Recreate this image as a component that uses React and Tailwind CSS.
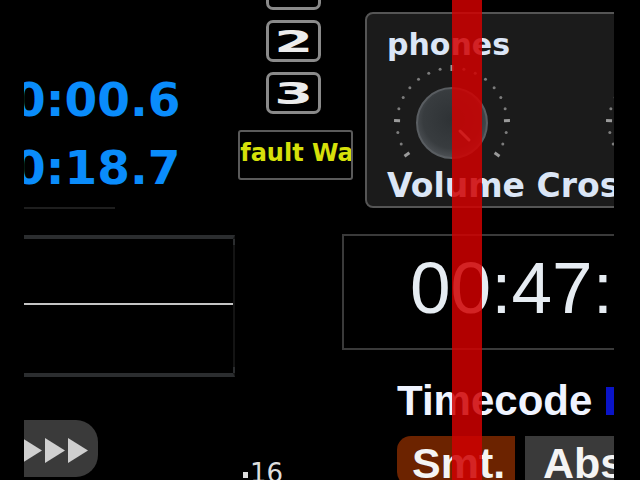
import React from "react";

function Knob({ showBody = true }) {
  const cx = 60;
  const cy = 61;
  const items = [];
  for (let i = 0; i <= 20; i++) {
    const a = (-125 + i * 12.5) * (Math.PI / 180);
    const x = cx + 55 * Math.sin(a);
    const y = cy - 55 * Math.cos(a);
    const major = i === 0 || i === 20 || i === 3 || i === 10 || i === 17;
    if (major) {
      const deg = -125 + i * 12.5;
      items.push(
        <rect
          key={i}
          x={x - 1.5}
          y={y - 3}
          width="3"
          height="6"
          fill="#9a9a9a"
          transform={`rotate(${deg} ${x} ${y})`}
        />
      );
    } else {
      items.push(<circle key={i} cx={x} cy={y} r="1.5" fill="#7c7c7c" />);
    }
  }
  return (
    <svg width="120" height="104" viewBox="0 0 120 104" className="shrink-0">
      <defs>
        <radialGradient id="kg" cx="50%" cy="45%" r="55%">
          <stop offset="0%" stopColor="#2e3235" />
          <stop offset="75%" stopColor="#383c3f" />
          <stop offset="100%" stopColor="#4d5155" />
        </radialGradient>
      </defs>
      {items}
      {showBody && (
        <>
          <circle cx={cx} cy={cy} r="35" fill="url(#kg)" stroke="#595d61" strokeWidth="2" />
          <line x1={cx + 8} y1={cy + 8} x2={cx + 17} y2={cy + 17} stroke="#c9c9c9" strokeWidth="3" strokeLinecap="round" />
        </>
      )}
    </svg>
  );
}

function NumBox({ n }) {
  return (
    <div className="ml-[31px] w-[55px] h-[42px] shrink-0 border-[3px] border-[#8a8a8a] rounded-[7px] bg-black flex items-center justify-center">
      <span className="inline-block scale-x-[1.8] text-[31px] leading-[31px] font-bold text-[#ececec] font-['DejaVu_Sans',sans-serif]">
        {n}
      </span>
    </div>
  );
}

export default function App() {
  return (
    <div className="w-[640px] h-[480px] bg-black overflow-hidden">
      <div className="ml-[24px] w-[590px] h-[480px] overflow-hidden relative flex">
        {/* Column A */}
        <div className="w-[211px] shrink-0 flex flex-col">
          <div className="mt-[77px] -ml-[11px] h-[46px] leading-[46px] text-[47px] font-bold text-[#0a8cfb] whitespace-nowrap font-['DejaVu_Sans',sans-serif]">
            0:00.6
          </div>
          <div className="mt-[22px] -ml-[11px] h-[46px] leading-[46px] text-[47px] font-bold text-[#0a8cfb] whitespace-nowrap font-['DejaVu_Sans',sans-serif]">
            0:18.7
          </div>
          <div className="mt-[16px] h-[2px] w-[91px] bg-[#1e1e1e]" />
          <div className="mt-[26px] h-[142px] border-t-4 border-b-4 border-[#2b2d2f] border-r-2 border-r-[#141414] relative">
            <div className="mt-[64px] h-[2px] bg-[#c4c4c4]" />
            <div className="absolute right-[-2px] top-0 w-[2px] h-[6px] bg-[#2b2d2f]" />
            <div className="absolute right-[-2px] bottom-0 w-[2px] h-[6px] bg-[#2b2d2f]" />
          </div>
          <div className="mt-[43px] h-[57px] w-[74px] bg-[#3a3a3a] rounded-r-[22px]">
            <svg width="74" height="57" viewBox="0 0 74 57">
              <polygon points="-2,18 18,30.5 -2,43" fill="#cfcfcf" />
              <polygon points="21,18 41,30.5 21,43" fill="#cfcfcf" />
              <polygon points="44,18 64,30.5 44,43" fill="#cfcfcf" />
            </svg>
          </div>
        </div>

        {/* Column B */}
        <div className="w-[107px] shrink-0 flex flex-col">
          <div className="-mt-[32px] flex flex-col gap-[10px]">
            <NumBox n="1" />
            <NumBox n="2" />
            <NumBox n="3" />
          </div>
          <div className="mt-[16px] ml-[3px] w-[115px] h-[50px] shrink-0 border-2 border-[#5a5a5a] rounded-[3px] overflow-hidden bg-black">
            <div className="pt-[9px] -ml-[36px] whitespace-nowrap text-[24px] leading-[24px] font-bold text-[#d6e00a] font-['DejaVu_Sans',sans-serif]">
              Default Waveform
            </div>
          </div>
          <div className="mt-[252px] ml-[22px] w-[26px] h-[4px] bg-[#c4c4c4]" />
          <div className="mt-[28px] ml-[8px] flex items-start">
            <div className="mt-[12px] w-[5px] h-[6px] bg-[#dddddd]" />
            <span className="ml-[2px] text-[26px] leading-[26px] text-[#dddddd] font-['DejaVu_Sans',sans-serif]">
              16
            </span>
          </div>
        </div>

        {/* Column C */}
        <div className="w-[272px] shrink-0 flex flex-col">
          <div className="mt-[12px] ml-[23px] w-[260px] h-[196px] shrink-0 border-2 border-[#555555] rounded-[8px] bg-[#1b1b1b] overflow-hidden flex flex-col pt-[16px] pl-[20px]">
            <div className="text-[30px] leading-[30px] font-bold text-[#dbe6f6] font-['DejaVu_Sans',sans-serif]">
              phones
            </div>
            <div className="mt-[2px] h-[104px] flex">
              <div className="ml-[5px]">
                <Knob />
              </div>
              <div className="ml-[92px]">
                <Knob />
              </div>
            </div>
            <div className="mt-[3px] whitespace-nowrap text-[33px] leading-[33px] font-bold text-[#dbe6f6] font-['DejaVu_Sans',sans-serif]">
              Volume Crossfader
            </div>
          </div>

          <div className="mt-[26px] w-[290px] h-[116px] shrink-0 border-2 border-[#3a3a3a] overflow-hidden">
            <div className="pt-[15px] pl-[66px] whitespace-nowrap text-[73px] leading-[73px] text-[#e6ecf2] font-['Liberation_Sans',sans-serif]">
              00:47:37
            </div>
          </div>

          <div className="mt-[30px] ml-[55px] flex items-center whitespace-nowrap">
            <span className="text-[42px] leading-[42px] font-bold text-[#f0f4ff] font-['Liberation_Sans',sans-serif]">
              Timecode
            </span>
            <div className="ml-[14px] w-[20px] h-[28px] bg-[#0a14c8] shrink-0" />
          </div>

          <div className="mt-[14px] ml-[55px] flex gap-[10px]">
            <div className="w-[118px] h-[50px] shrink-0 bg-[#6c2300] rounded-l-[14px] pt-[6px] pl-[15px] whitespace-nowrap text-[43px] leading-[43px] font-bold text-[#f4f4f4] font-['Liberation_Sans',sans-serif]">
              Smt.
            </div>
            <div className="w-[100px] h-[50px] shrink-0 bg-[#3a3a3a] pt-[6px] pl-[18px] whitespace-nowrap text-[43px] leading-[43px] font-bold text-[#f4f4f4] font-['Liberation_Sans',sans-serif]">
              Abs
            </div>
          </div>
        </div>

        {/* playhead marker overlay */}
        <div className="absolute left-[428px] top-0 w-[30px] h-full bg-[#d00000]/85" />
      </div>
    </div>
  );
}
